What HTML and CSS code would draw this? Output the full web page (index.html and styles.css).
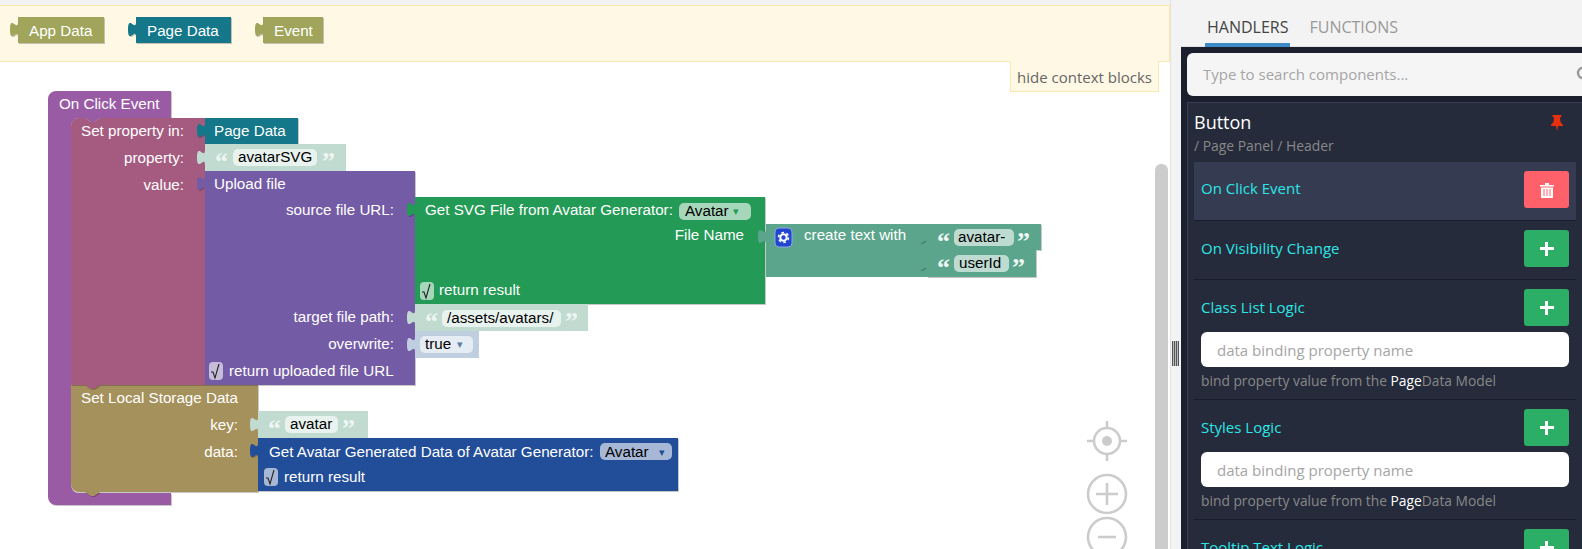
FILE: index.html
```html
<!DOCTYPE html>
<html lang="en">
<head>
    <meta charset="UTF-8">
    <meta name="viewport" content="width=device-width, initial-scale=1.0">
    <title>Logic Designer</title>
    <link rel="stylesheet" href="styles.css">
</head>
<body>

<div class="app">

    <div class="workspace">
        <div class="context-bar">
            <svg class="ctx-block" width="95" height="29" viewBox="0 0 95 29">
                <path class="block olive" d="M8,0 H94 V26 H8 V20 c0,-10 -8,8 -8,-7.5 s8,2.5 8,-7.5 z"/>
                <text class="lbl" x="19" y="19">App Data</text>
            </svg>
            <svg class="ctx-block" width="104" height="29" viewBox="0 0 104 29">
                <path class="block teal" d="M8,0 H103 V26 H8 V20 c0,-10 -8,8 -8,-7.5 s8,2.5 8,-7.5 z"/>
                <text class="lbl" x="19" y="19">Page Data</text>
            </svg>
            <svg class="ctx-block" width="70" height="29" viewBox="0 0 70 29">
                <path class="block olive" d="M8,0 H68 V26 H8 V20 c0,-10 -8,8 -8,-7.5 s8,2.5 8,-7.5 z"/>
                <text class="lbl" x="19" y="19">Event</text>
            </svg>
        </div>
        <div class="hide-tab">hide context blocks</div>

        <!-- canvas uses page coordinates, so viewBox starts at the bar bottom -->
        <svg class="canvas" width="1170" height="488" viewBox="0 61 1170 488">
            <!-- on click event -->
            <path class="block hat" d="M56,91 H171 V118 H100 l-6,4 h-3 l-6,-4 H79 a8,8 0 0 0 -8,8 V485 a8,8 0 0 0 8,8 H171 V505 H56 a8,8 0 0 1 -8,-8 V99 a8,8 0 0 1 8,-8 z"/>
            <text class="lbl" x="59" y="109">On Click Event</text>

            <!-- set local storage -->
            <path class="block sand" d="M71,385 H258 V492 H100 l-6,4 h-3 l-6,-4 H79 a8,8 0 0 1 -8,-8 z"/>
            <text class="lbl" x="81" y="403">Set Local Storage Data</text>
            <text class="lbl end" x="238" y="430">key:</text>
            <text class="lbl end" x="238" y="457">data:</text>

            <!-- set property -->
            <path class="block maroon" d="M79,118 H85 l6,4 h3 l6,-4 H205 V385 H100 l-6,4 h-3 l-6,-4 H71 V126 a8,8 0 0 1 8,-8 z"/>
            <text class="lbl end" x="184" y="136">Set property in:</text>
            <text class="lbl end" x="184" y="163">property:</text>
            <text class="lbl end" x="184" y="190">value:</text>

            <path class="block teal" d="M205,118 H298 V144 H205 V138 c0,-10 -8,8 -8,-7.5 s8,2.5 8,-7.5 z"/>
            <text class="lbl" x="214" y="136">Page Data</text>

            <path class="plain string" d="M205,144 H346 V171 H205 V165 c0,-10 -8,8 -8,-7.5 s8,2.5 8,-7.5 z"/>
            <text class="quote" x="215" y="170">“</text>
            <rect class="field" x="233" y="149" width="84" height="17" rx="5"/>
            <text class="val" x="238" y="162">avatarSVG</text>
            <text class="quote" x="322" y="170">”</text>

            <!-- upload file -->
            <path class="block purple" d="M205,171 H415 V385 H205 V191 c0,-10 -8,8 -8,-7.5 s8,2.5 8,-7.5 z"/>
            <text class="lbl" x="214" y="189">Upload file</text>
            <text class="lbl end" x="394" y="215">source file URL:</text>
            <text class="lbl end" x="394" y="322">target file path:</text>
            <text class="lbl end" x="394" y="349">overwrite:</text>
            <rect class="purple-soft" x="209" y="362" width="14" height="18" rx="4"/>
            <path class="tick" d="M211,372 h2 l2,6 l4,-14"/>
            <text class="lbl" x="229" y="376">return uploaded file URL</text>

            <!-- avatar svg -->
            <path class="block green" d="M415,197 H765 V304 H415 V217 c0,-10 -8,8 -8,-7.5 s8,2.5 8,-7.5 z"/>
            <text class="lbl" x="425" y="215">Get SVG File from Avatar Generator:</text>
            <rect class="green-soft" x="679" y="203" width="72" height="17" rx="5"/>
            <text class="val" x="685" y="216">Avatar</text>
            <text class="arrow green-arrow" x="733" y="215">▾</text>
            <text class="lbl end" x="744" y="240">File Name</text>
            <rect class="green-soft" x="420" y="282" width="14" height="18" rx="4"/>
            <path class="tick" d="M422,292 h2 l2,6 l4,-14"/>
            <text class="lbl" x="439" y="295">return result</text>

            <!-- create text -->
            <path class="plain sea" d="M766,224 H927 V277 H766 V244 c0,-10 -8,8 -8,-7.5 s8,2.5 8,-7.5 z"/>
            <rect class="gear-box" x="775" y="228" width="17" height="19" rx="4"/>
            <circle class="gear-teeth" cx="783.5" cy="237.5" r="5"/>
            <circle class="gear-ring" cx="783.5" cy="237.5" r="3.2"/>
            <text class="lbl" x="804" y="240">create text with</text>

            <path class="block sea" d="M927,224 H1041 V250 H927 V244 c0,-10 -8,8 -8,-7.5 s8,2.5 8,-7.5 z"/>
            <text class="quote" x="937" y="250">“</text>
            <rect class="field sea-soft" x="954" y="229" width="60" height="17" rx="5"/>
            <text class="val" x="958" y="242">avatar-</text>
            <text class="quote" x="1017" y="250">”</text>
            <path class="block sea" d="M927,250 H1036 V277 H927 V271 c0,-10 -8,8 -8,-7.5 s8,2.5 8,-7.5 z"/>
            <text class="quote" x="937" y="276">“</text>
            <rect class="field sea-soft" x="954" y="255" width="55" height="17" rx="5"/>
            <text class="val" x="959" y="268">userId</text>
            <text class="quote" x="1012" y="276">”</text>

            <!-- target path and overwrite -->
            <path class="plain string" d="M415,304 H588 V331 H415 V325 c0,-10 -8,8 -8,-7.5 s8,2.5 8,-7.5 z"/>
            <text class="quote" x="425" y="330">“</text>
            <rect class="field" x="442" y="310" width="119" height="17" rx="5"/>
            <text class="val" x="447" y="323">/assets/avatars/</text>
            <text class="quote" x="565" y="330">”</text>

            <path class="plain steel" d="M415,331 H479 V358 H415 V352 c0,-10 -8,8 -8,-7.5 s8,2.5 8,-7.5 z"/>
            <rect class="field steel-soft" x="420" y="336" width="53" height="17" rx="5"/>
            <text class="val" x="425" y="349">true</text>
            <text class="arrow steel-arrow" x="457" y="348">▾</text>

            <!-- local storage inputs -->
            <path class="plain string" d="M258,411 H368 V438 H258 V432 c0,-10 -8,8 -8,-7.5 s8,2.5 8,-7.5 z"/>
            <text class="quote" x="268" y="437">“</text>
            <rect class="field" x="285" y="416" width="53" height="17" rx="5"/>
            <text class="val" x="290" y="429">avatar</text>
            <text class="quote" x="342" y="437">”</text>

            <path class="block navy" d="M258,438 H678 V491 H258 V458 c0,-10 -8,8 -8,-7.5 s8,2.5 8,-7.5 z"/>
            <text class="lbl" x="269" y="457">Get Avatar Generated Data of Avatar Generator:</text>
            <rect class="navy-soft" x="600" y="443" width="72" height="17" rx="5"/>
            <text class="val" x="605" y="457">Avatar</text>
            <text class="arrow navy-arrow" x="659" y="456">▾</text>
            <rect class="navy-soft" x="264" y="468" width="14" height="18" rx="4"/>
            <path class="tick" d="M266,478 h2 l2,6 l4,-14"/>
            <text class="lbl" x="284" y="482">return result</text>

            <!-- zoom controls -->
            <g class="zoom-icon">
                <circle cx="1107" cy="441" r="13"/>
                <path d="M1107,421 V428 M1107,454 V461 M1087,441 H1094 M1120,441 H1127"/>
                <circle class="zoom-dot" cx="1107" cy="441" r="5"/>
                <circle cx="1107" cy="494" r="19"/>
                <path d="M1096,494 H1118 M1107,483 V505"/>
                <circle cx="1107" cy="537" r="19"/>
                <path d="M1098,537 H1116"/>
            </g>

            <rect class="scroll-thumb" x="1155" y="164" width="13" height="400" rx="6"/>
        </svg>
    </div>

    <div class="resizer"><span class="grip"></span></div>

    <div class="panel">
        <div class="tabs">
            <div class="tab active">HANDLERS</div>
            <div class="tab">FUNCTIONS</div>
        </div>

        <div class="panel-body">
            <div class="search">
                <span class="search-text">Type to search components...</span>
                <svg class="search-icon" width="16" height="16" viewBox="0 0 16 16"><circle cx="7" cy="7" r="5" fill="none" stroke="#999" stroke-width="2.4"/><path d="M11,11 L15,15" stroke="#999" stroke-width="2.4"/></svg>
            </div>

            <div class="card">
                <div class="card-head">
                    <div>
                        <div class="card-title">Button</div>
                        <div class="card-path">/ Page Panel / Header</div>
                    </div>
                    <svg class="pin" width="14" height="16" viewBox="0 0 14 16"><path d="M2.5,0 H11.5 V1.5 L10,2.5 L10.5,7 L13,10 V11 H8 L7,16 L6,11 H1 V10 L3.5,7 L4,2.5 L2.5,1.5 z" fill="#e8300f"/></svg>
                </div>

                <div class="row selected">
                    <div class="row-top">
                        <span class="row-name">On Click Event</span>
                        <span class="btn btn-del">
                            <svg width="14" height="16" viewBox="0 0 14 16"><path d="M0,3 H5 V1 H9 V3 H14 V4.5 H0 z M1,5.5 H13 V16 H1 z" fill="#fff"/><path d="M4,7 V14 M7,7 V14 M10,7 V14" stroke="#ff616b" stroke-width="1"/></svg>
                        </span>
                    </div>
                </div>

                <div class="row">
                    <div class="row-top">
                        <span class="row-name">On Visibility Change</span>
                        <span class="btn btn-add"><span class="plus"></span></span>
                    </div>
                </div>

                <div class="row row-logic">
                    <div class="row-top">
                        <span class="row-name">Class List Logic</span>
                        <span class="btn btn-add"><span class="plus"></span></span>
                    </div>
                    <div class="bind-input">data binding property name</div>
                    <div class="bind-hint">bind property value from the <b>Page</b>Data Model</div>
                </div>

                <div class="row row-logic">
                    <div class="row-top">
                        <span class="row-name">Styles Logic</span>
                        <span class="btn btn-add"><span class="plus"></span></span>
                    </div>
                    <div class="bind-input">data binding property name</div>
                    <div class="bind-hint">bind property value from the <b>Page</b>Data Model</div>
                </div>

                <div class="row row-logic">
                    <div class="row-top">
                        <span class="row-name">Tooltip Text Logic</span>
                        <span class="btn btn-add"><span class="plus"></span></span>
                    </div>
                </div>
            </div>
        </div>
    </div>

</div>

</body>
</html>
```

FILE: styles.css
```css
html, body {
    margin: 0;
    padding: 0;
    height: 100%;
    overflow: hidden;
    background: #fff;
}

.app {
    display: flex;
    height: 549px;
    overflow: hidden;
}

/* workspace */
.workspace {
    position: relative;
    width: 1171px;
    flex-shrink: 0;
    padding-top: 5px;
    box-sizing: border-box;
    background: linear-gradient(#f3f3f3 5px, #fff 5px);
    border-right: 1px solid #e3e3e3;
}

.context-bar {
    display: flex;
    gap: 23px;
    box-sizing: border-box;
    height: 57px;
    padding: 11px 0 0 10px;
    background: #fff8e5;
    border-top: 1px solid #f9e8b0;
    border-bottom: 1px solid #f9e8b0;
    border-right: 1px solid #f9e8b0;
}

.ctx-block {
    display: block;
}

.hide-tab {
    position: absolute;
    top: 61px;
    right: 11px;
    box-sizing: border-box;
    height: 31px;
    padding: 6px 6px 0;
    font-family: "Open Sans", sans-serif;
    font-size: 15px;
    color: #666;
    background: #fff8e5;
    border: 1px solid #f9e8b0;
    border-top: none;
}

.canvas {
    display: block;
    margin-top: -1px;
}

/* blocks */
.block {
    filter: drop-shadow(1px 1px 0 rgba(0, 0, 0, 0.22));
}

.olive { fill: #a0a55b; }
.teal { fill: #14778a; }
.hat { fill: #9a5ba5; }
.maroon { fill: #a55b80; }
.sand { fill: #a5915b; }
.purple { fill: #745ba5; }
.green { fill: #239a55; }
.sea { fill: #5ba58c; }
.navy { fill: #224d99; }
.string { fill: #c1dbd1; }
.steel { fill: #bfcfdf; }

.lbl {
    font-family: "Liberation Sans", Arial, sans-serif;
    font-size: 15.2px;
    fill: #fff;
}

.end {
    text-anchor: end;
}

.val {
    font-family: "Liberation Sans", Arial, sans-serif;
    font-size: 15.2px;
    fill: #000;
}

.quote {
    font-family: "Liberation Serif", serif;
    font-size: 26px;
    font-weight: bold;
    fill: #eef6f3;
}

.field { fill: #e8f2ee; }
.sea-soft { fill: #bddbd0; }
.steel-soft { fill: #e6ecf3; }
.green-soft { fill: #a7d7bb; }
.navy-soft { fill: #a7b8d6; }
.purple-soft { fill: #c7bddb; }

.tick {
    fill: none;
    stroke: #222;
    stroke-width: 1.1;
}

.arrow {
    font-family: "DejaVu Sans", sans-serif;
    font-size: 11px;
}

.green-arrow { fill: #239a55; }
.steel-arrow { fill: #5a7ca5; }
.navy-arrow { fill: #224d99; }

.gear-box {
    fill: #2145cf;
    stroke: #8ea6e6;
    stroke-width: 1;
}

.gear-teeth {
    fill: none;
    stroke: #fff;
    stroke-width: 1.6;
    stroke-dasharray: 2.6 2.6;
}

.gear-ring {
    fill: none;
    stroke: #fff;
    stroke-width: 2;
}

.zoom-icon circle,
.zoom-icon path {
    fill: none;
    stroke: #ccc;
    stroke-width: 2.6;
}

.zoom-icon .zoom-dot {
    fill: #ccc;
    stroke: none;
}

.scroll-thumb {
    fill: #ccc;
}

/* resizer */
.resizer {
    width: 10px;
    flex-shrink: 0;
    background: #f3f3f3;
}

.grip {
    display: block;
    width: 7px;
    height: 25px;
    margin: 341px 0 0 1px;
    background: repeating-linear-gradient(90deg, #555 0 1px, #bbb 1px 2px);
}

/* right panel */
.panel {
    flex: 1;
    min-width: 0;
    background: #f3f3f3;
    font-family: "Open Sans", sans-serif;
}

.tabs {
    display: flex;
    gap: 17px;
    height: 47px;
    box-sizing: border-box;
    padding-left: 24px;
    border-bottom: 1px solid #e2e2e2;
}

.tab {
    height: 47px;
    box-sizing: border-box;
    padding: 17px 2px 0;
    font-size: 16px;
    line-height: 20px;
    color: #999;
}

.tab.active {
    color: #444;
    border-bottom: 4px solid #3d8bc6;
}

.panel-body {
    height: 502px;
    box-sizing: border-box;
    padding: 6px 0 0 6px;
    background: #1b1f2e;
    overflow: hidden;
}

.search {
    display: flex;
    align-items: center;
    justify-content: space-between;
    height: 43px;
    box-sizing: border-box;
    padding: 0 0 2px 16px;
    background: #f5f5f5;
    border-radius: 6px 0 0 6px;
    overflow: hidden;
}

.search-text {
    font-size: 15px;
    color: #a5a5a5;
}

.search-icon {
    margin-right: -10px;
}

.card {
    margin-top: 6px;
    height: 460px;
    box-sizing: border-box;
    padding: 0 6px;
    background: #252b3b;
    border-top: 1px solid #363c52;
    border-left: 1px solid #363c52;
}

.card-head {
    display: flex;
    justify-content: space-between;
    height: 59px;
    box-sizing: border-box;
    padding-top: 7px;
}

.card-title {
    font-size: 18px;
    line-height: 24px;
    color: #fff;
}

.card-path {
    font-size: 13.9px;
    line-height: 20px;
    margin-top: 2px;
    color: #888;
}

.pin {
    margin: 5px 12px 0 0;
}

.row {
    height: 59px;
    box-sizing: border-box;
    padding: 9px 7px 0;
    border-bottom: 1px solid #191d2a;
}

.row.selected {
    background: #353c52;
}

.row.selected .row-name {
    margin-top: -4px;
}

.row-logic {
    height: 120px;
}

.row-top {
    display: flex;
    align-items: center;
    justify-content: space-between;
}

.row-name {
    font-size: 15px;
    color: #2ce6e6;
    margin-top: -2px;
}

.btn {
    display: flex;
    align-items: center;
    justify-content: center;
    width: 45px;
    height: 37px;
    border-radius: 3px;
}

.btn-add { background: #2cae66; }
.btn-del { background: #ff616b; }

.plus {
    display: block;
    width: 14px;
    height: 14px;
    background:
        linear-gradient(#fff, #fff) center / 14px 3px no-repeat,
        linear-gradient(#fff, #fff) center / 3px 14px no-repeat;
}

.bind-input {
    height: 35px;
    box-sizing: border-box;
    margin-top: 6px;
    padding: 1px 16px 0;
    font-size: 15px;
    line-height: 34px;
    color: #a5a5a5;
    background: #fff;
    border-radius: 6px;
}

.bind-hint {
    margin-top: 4px;
    font-size: 13.8px;
    line-height: 20px;
    color: #888;
}

.bind-hint b {
    font-weight: normal;
    color: #fff;
}
```
